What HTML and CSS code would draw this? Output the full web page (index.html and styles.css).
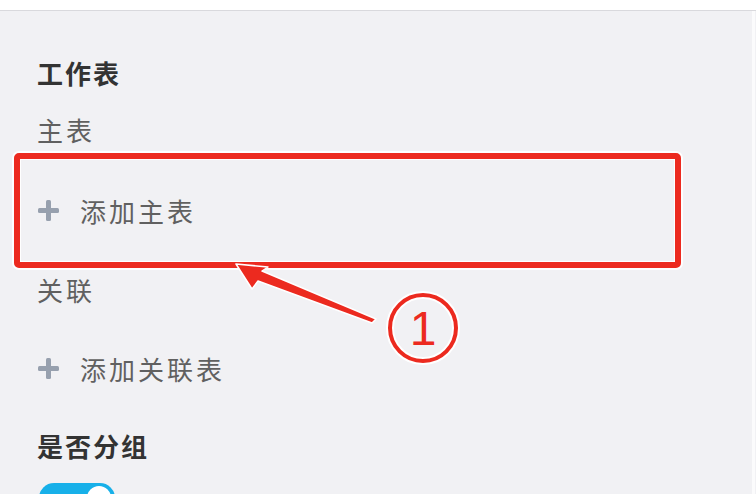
FILE: index.html
```html
<!DOCTYPE html>
<html lang="zh-CN">
<head>
    <meta charset="UTF-8">
    <title>工作表设置</title>
    <link rel="stylesheet" href="styles.css">
</head>
<body>

<div class="topbar"></div>

<div class="panel">
    <div class="section-title">工作表</div>
    <div class="label">主表</div>
    <div class="add-row first">
        <svg class="plus" width="21" height="21" viewBox="0 0 21 21">
            <rect x="0" y="8" width="21" height="5" rx="1.5" fill="#97a0ae"/>
            <rect x="8" y="0" width="5" height="21" rx="1.5" fill="#97a0ae"/>
        </svg>
        <span>添加主表</span>
    </div>
    <div class="label">关联</div>
    <div class="add-row">
        <svg class="plus" width="21" height="21" viewBox="0 0 21 21">
            <rect x="0" y="8" width="21" height="5" rx="1.5" fill="#97a0ae"/>
            <rect x="8" y="0" width="5" height="21" rx="1.5" fill="#97a0ae"/>
        </svg>
        <span>添加关联表</span>
    </div>
    <div class="section-title group">是否分组</div>
    <div class="switch"><span class="knob"></span></div>
</div>

<!-- annotation overlay -->
<div class="mark-box"></div>
<svg class="mark-arrow" width="756" height="494" viewBox="0 0 756 494">
    <polygon points="236,264 268,267 262,271 376,319 372,323 258,281 252,289"
             fill="#ec2a1f" stroke="#fff" stroke-width="1.5" stroke-linejoin="round"/>
    <circle cx="423" cy="328" r="33" fill="none" stroke="#fff" stroke-width="8"/>
    <circle cx="423" cy="328" r="33" fill="none" stroke="#ec2a1f" stroke-width="4"/>
    <text x="423" y="345" text-anchor="middle" class="mark-num">1</text>
</svg>

</body>
</html>
```

FILE: styles.css
```css
body {
    margin: 0;
    padding: 0;
    width: 756px;
    height: 494px;
    overflow: hidden;
    background-color: #f1f1f4;
    font-family: "Noto Sans CJK SC", "Noto Sans", sans-serif;
    position: relative;
}

.topbar {
    height: 10px;
    background-color: #fff;
    border-bottom: 1px solid #d9d9dd;
}

.panel {
    padding-left: 37px;
    border-right: 3px solid #fbfbfc;
    margin-right: 1px;
    height: 483px;
}

.section-title {
    padding-top: 47px;
    height: 30px;
    line-height: 30px;
    font-size: 26px;
    letter-spacing: 2px;
    font-weight: bold;
    color: #333;
}

.section-title.group {
    padding-top: 48px;
}

.label {
    margin-top: 27px;
    height: 30px;
    line-height: 30px;
    font-size: 26px;
    letter-spacing: 3px;
    color: #606060;
}

.add-row {
    margin-top: 48px;
    height: 30px;
    display: flex;
    align-items: center;
    gap: 21px;
    font-size: 26px;
    letter-spacing: 3px;
    color: #606060;
}

.add-row.first {
    margin-top: 50px;
    margin-bottom: 50px;
}

.plus {
    flex: none;
    margin-left: 1px;
}

.switch {
    margin-top: 22px;
    margin-left: 2px;
    width: 76px;
    height: 30px;
    border-radius: 15px;
    background-color: #17b0e9;
    position: relative;
}

.knob {
    position: absolute;
    top: 3px;
    right: 4px;
    width: 24px;
    height: 24px;
    border-radius: 50%;
    background-color: #fff;
}

/* red annotation */
.mark-box {
    position: absolute;
    left: 14px;
    top: 153px;
    width: 655px;
    height: 103px;
    border: 6px solid #ec2a1f;
    border-radius: 5px;
    box-shadow: 0 0 0 2px rgba(255, 255, 255, 0.9), inset 0 0 0 1px #fff;
}

.mark-arrow {
    position: absolute;
    left: 0;
    top: 0;
}

.mark-num {
    font-family: "Liberation Sans", sans-serif;
    font-size: 48px;
    fill: #ec2a1f;
}
```
